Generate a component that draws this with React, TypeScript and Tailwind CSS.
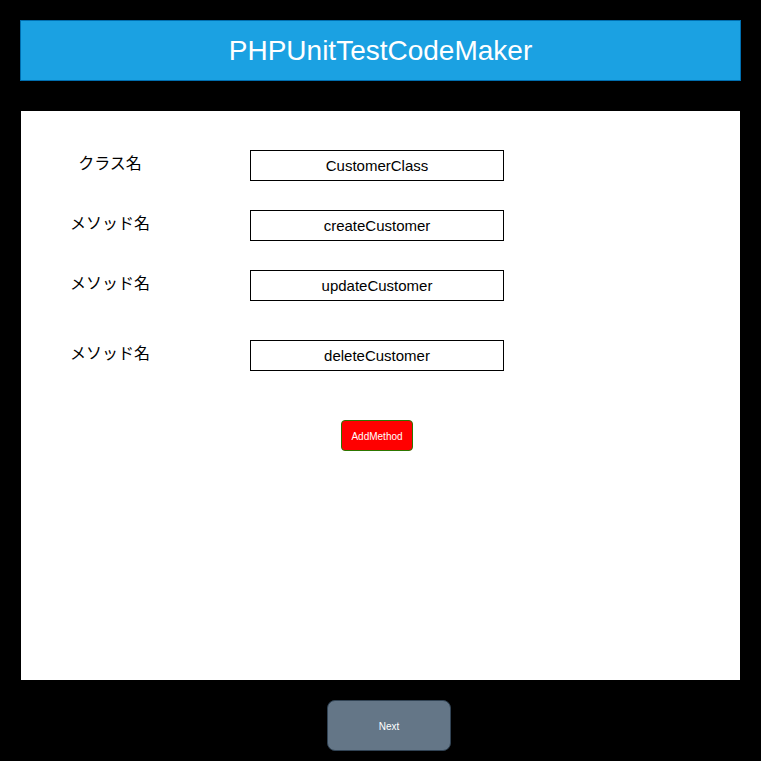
import React from 'react';

const rows = [
  { label: 'クラス名', value: 'CustomerClass', mt: 'mt-0' },
  { label: 'メソッド名', value: 'createCustomer', mt: 'mt-[29px]' },
  { label: 'メソッド名', value: 'updateCustomer', mt: 'mt-[29px]' },
  { label: 'メソッド名', value: 'deleteCustomer', mt: 'mt-[39px]' },
];

const App: React.FC = () => {
  return (
    <div className="min-h-[761px] w-[761px] bg-black pt-5 font-['Liberation_Sans','Noto_Sans_CJK_JP',sans-serif]">
      <header className="ml-5 flex h-[61px] w-[721px] items-center justify-center border border-[#006eaf] bg-[#1ba1e2]">
        <h1 className="text-[28px] text-white">PHPUnitTestCodeMaker</h1>
      </header>

      <main className="ml-[21px] mt-[30px] h-[569px] w-[719px] bg-white pt-[39px]">
        {rows.map((row, i) => (
          <div key={i} className={`flex items-center ${row.mt}`}>
            <div className="-mt-[3px] w-[178px] text-center text-base text-black">{row.label}</div>
            <div className="ml-[51px] flex h-[31px] w-[254px] items-center justify-center border border-black pt-[2px] text-[15px] text-black">
              {row.value}
            </div>
          </div>
        ))}

        <div className="mt-[49px] flex">
          <button className="ml-[320px] flex h-[31px] w-[72px] items-center justify-center rounded-[4px] border border-[#2d7600] bg-[#ff0000] pt-[2px] text-[10px] text-white">
            AddMethod
          </button>
        </div>
      </main>

      <div className="mt-5 flex">
        <button className="ml-[327px] flex h-[51px] w-[124px] items-center justify-center rounded-[8px] border border-[#314354] bg-[#647687] pt-[2px] text-[10px] text-white">
          Next
        </button>
      </div>
    </div>
  );
};

export default App;
